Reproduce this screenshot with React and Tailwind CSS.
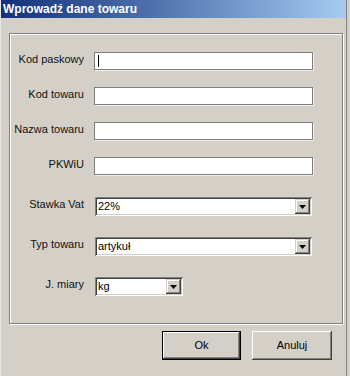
import React from "react";

const font = { fontFamily: '"Liberation Sans", Arial, sans-serif' };

function Arrow() {
  return (
    <svg width="7" height="4" viewBox="0 0 7 4">
      <path d="M0 0h7L3.5 4z" fill="#000" />
    </svg>
  );
}

function TextField({ caret }) {
  return (
    <div className="h-[18px] w-[219px] bg-white border border-[#7f7f7f] shadow-[1px_1px_0_#eeeeee] flex items-center pl-[3px]">
      {caret && <div className="w-px h-[12px] bg-black" />}
    </div>
  );
}

function Combo({ value, width }) {
  return (
    <div
      className={`${width} h-[19px] bg-white flex items-center p-[2px] shadow-[inset_1px_1px_#808080,inset_-1px_-1px_#ffffff,inset_2px_2px_#404040,inset_-2px_-2px_#d4d0c8]`}
    >
      <span className="flex-1 pl-[1px] text-[11px] text-black leading-none">{value}</span>
      <div className="w-[15px] h-full bg-[#d4d0c8] flex items-center justify-center shadow-[inset_-1px_-1px_#404040,inset_1px_1px_#d4d0c8,inset_-2px_-2px_#808080,inset_2px_2px_#ffffff]">
        <Arrow />
      </div>
    </div>
  );
}

function Row({ label, children, className }) {
  return (
    <div className={`flex items-center ${className}`}>
      <div className="w-[74px] text-right text-[11px] leading-none text-[#111] pb-[4px] whitespace-nowrap">{label}</div>
      <div className="ml-[10px]">{children}</div>
    </div>
  );
}

export default function App() {
  return (
    <div className="w-[350px] h-[376px] bg-[#d4d0c8] overflow-hidden" style={font}>
      <div className="w-[347px] h-[376px] border-l border-l-[#e8e6e0] border-r border-r-[#808080]">
        <div className="h-[18px] bg-gradient-to-r from-[#14307a] to-[#a6caf0] flex items-center pl-[2px]">
          <span className="text-white font-bold text-[12px] leading-none">Wprowadź dane towaru</span>
        </div>
        <div className="ml-[8px] mt-[15px] w-[334px] h-[291px] border border-[#808080] shadow-[1px_1px_0_#ffffff,inset_1px_1px_0_#ffffff] pt-[18px]">
          <Row label="Kod paskowy">
            <TextField caret />
          </Row>
          <Row label="Kod towaru" className="mt-[17px]">
            <TextField />
          </Row>
          <Row label="Nazwa towaru" className="mt-[17px]">
            <TextField />
          </Row>
          <Row label="PKWiU" className="mt-[17px]">
            <TextField />
          </Row>
          <Row label="Stawka Vat" className="mt-[22px] [&>div:last-child]:ml-[11px]">
            <Combo value="22%" width="w-[217px]" />
          </Row>
          <Row label="Typ towaru" className="mt-[21px] [&>div:last-child]:ml-[11px]">
            <Combo value="artykuł" width="w-[217px]" />
          </Row>
          <Row label="J. miary" className="mt-[21px] [&>div:last-child]:ml-[11px]">
            <Combo value="kg" width="w-[88px]" />
          </Row>
        </div>
        <div className="mt-[7px] ml-[161px] flex gap-[11px]">
          <div className="w-[79px] h-[29px] border border-black">
            <div className="w-full h-full flex items-center justify-center text-[11px] text-black shadow-[inset_-1px_-1px_#404040,inset_1px_1px_#ffffff,inset_-2px_-2px_#808080]">
              Ok
            </div>
          </div>
          <div className="w-[80px] h-[29px] flex items-center justify-center text-[11px] text-black shadow-[inset_-1px_-1px_#404040,inset_1px_1px_#ffffff,inset_-2px_-2px_#808080]">
            Anuluj
          </div>
        </div>
      </div>
    </div>
  );
}
